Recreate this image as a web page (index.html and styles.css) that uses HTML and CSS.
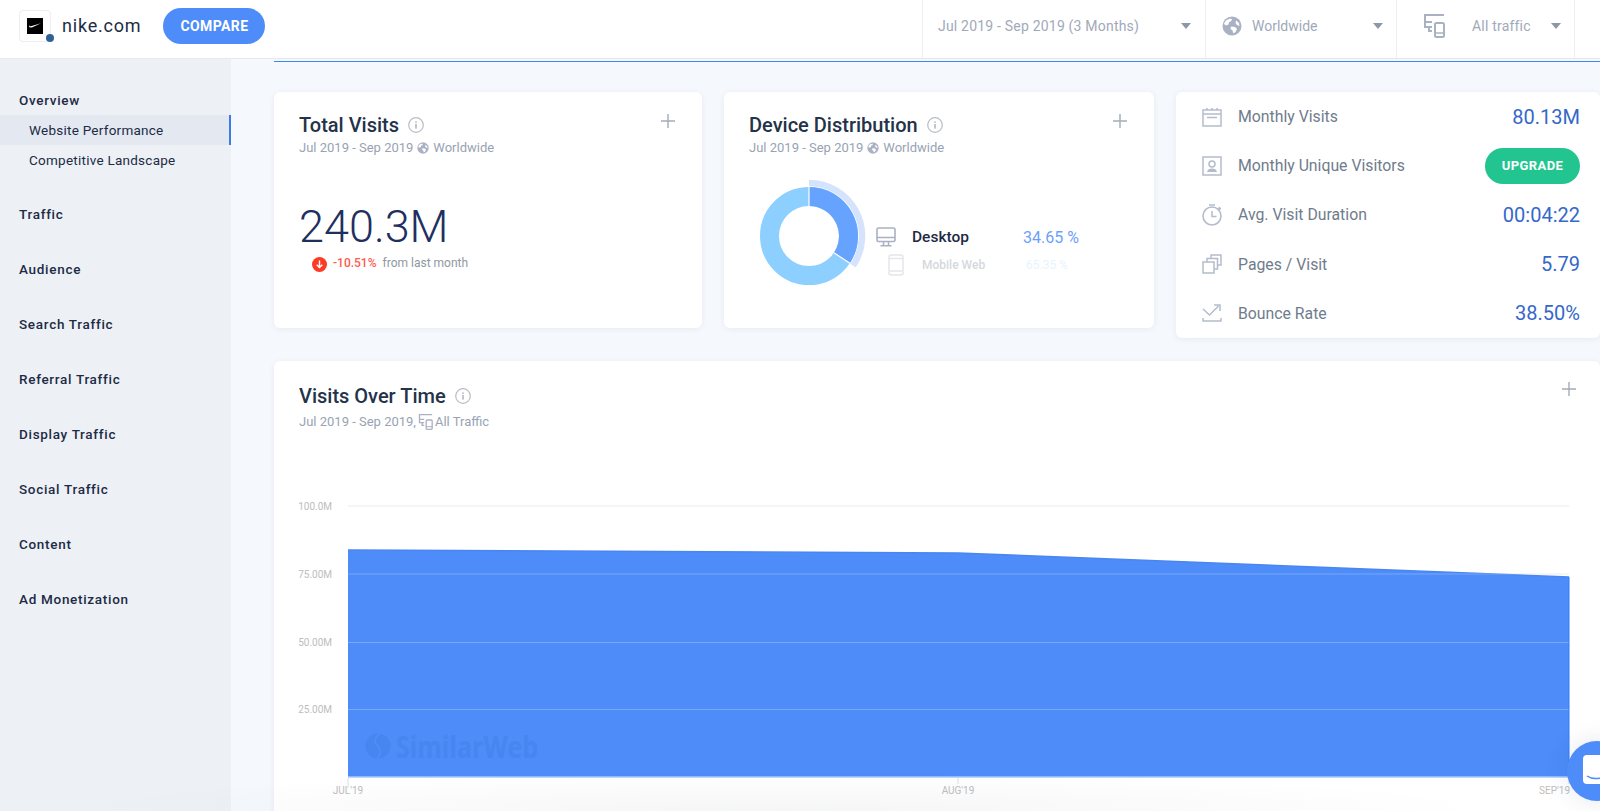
FILE: index.html
```html
<!DOCTYPE html>
<html lang="en">

<head>
    <meta charset="UTF-8">
    <meta name="viewport" content="width=device-width, initial-scale=1.0">
    <title>nike.com - Website Performance</title>
    <link rel="stylesheet" href="styles.css">
</head>

<body>

    <svg class="sprites" width="0" height="0">
        <symbol id="i-info" viewBox="0 0 16 16">
            <circle cx="8" cy="8" r="7.300" fill="none" stroke="#b9bdc3" stroke-width="1.200" />
            <rect x="7.300" y="7" width="1.400" height="4.600" fill="#a9aeb5" />
            <rect x="7.300" y="4.400" width="1.400" height="1.500" fill="#a9aeb5" />
        </symbol>
        <symbol id="i-plus" viewBox="0 0 14 14">
            <path d="M7 0v14M0 7h14" stroke="#a3acb9" stroke-width="1.400" fill="none" />
        </symbol>
        <symbol id="i-globe" viewBox="0 0 20 20">
            <circle cx="10" cy="10" r="9.500" fill="#a9b1c2" />
            <path d="M4 4.500c2-1.500 4-2 6-1.500l-1 2.500-2 .5-.5 2.500-2.500 1-2-1.500c.3-1.300 1-2.500 2-3.500zM9 10.500l4 .5 2 2-1.500 3-2 1.500-1-3-2-1.500zM14 4.500l3 2.500.5 3-2.500-1-1.500-2z" fill="#fff" />
        </symbol>
        <symbol id="i-devices" viewBox="0 0 22 24">
            <path d="M21 1H2v12h7M2 8h7M6 13v4h3" fill="none" stroke="#a9b1c2" stroke-width="2" />
            <rect x="12" y="9" width="9" height="14" rx="1.500" fill="none" stroke="#a9b1c2" stroke-width="2" />
            <path d="M12 19h9" stroke="#a9b1c2" stroke-width="1.500" />
        </symbol>
        <symbol id="i-caret" viewBox="0 0 12 7">
            <path d="M0 0h12L6 7z" fill="#8e96a8" />
        </symbol>
    </svg>

    <header class="topbar">
        <div class="site">
            <div class="site-logo">
                <span class="site-logo-mark">
                    <svg width="12" height="6" viewBox="0 0 12 6">
                        <path d="M12 .3L3.400 4.200C1.800 4.900.4 4.700.1 3.800 0 3.300.2 2.700.7 2 .5 3 .9 3.500 1.900 3.300z" fill="#fff" />
                    </svg>
                </span>
                <span class="site-logo-dot"></span>
            </div>
            <span class="site-name">nike.com</span>
            <button class="compare-btn" type="button">COMPARE</button>
        </div>
        <div class="filters">
            <div class="filter filter-date">
                <span>Jul 2019 - Sep 2019 (3 Months)</span>
                <svg class="caret" width="10" height="6"><use href="#i-caret" /></svg>
            </div>
            <div class="filter filter-geo">
                <svg width="20" height="20"><use href="#i-globe" /></svg>
                <span>Worldwide</span>
                <svg class="caret" width="10" height="6"><use href="#i-caret" /></svg>
            </div>
            <div class="filter filter-traffic">
                <svg width="22" height="24"><use href="#i-devices" /></svg>
                <span>All traffic</span>
                <svg class="caret" width="10" height="6"><use href="#i-caret" /></svg>
            </div>
        </div>
    </header>

    <div class="layout">
        <nav class="sidebar">
            <div class="nav-group nav-group-open">
                <div class="nav-title">Overview</div>
                <a class="nav-item nav-item-active">Website Performance</a>
                <a class="nav-item">Competitive Landscape</a>
            </div>
            <div class="nav-group"><div class="nav-title">Traffic</div></div>
            <div class="nav-group"><div class="nav-title">Audience</div></div>
            <div class="nav-group"><div class="nav-title">Search Traffic</div></div>
            <div class="nav-group"><div class="nav-title">Referral Traffic</div></div>
            <div class="nav-group"><div class="nav-title">Display Traffic</div></div>
            <div class="nav-group"><div class="nav-title">Social Traffic</div></div>
            <div class="nav-group"><div class="nav-title">Content</div></div>
            <div class="nav-group"><div class="nav-title">Ad Monetization</div></div>
        </nav>

        <main class="content">
            <div class="top-cards">
                <section class="card card-top">
                    <div class="card-head">
                        <div>
                            <h2 class="card-title">Total Visits
                                <svg class="info" width="16" height="16"><use href="#i-info" /></svg>
                            </h2>
                            <div class="card-sub">Jul 2019 - Sep 2019
                                <svg width="12" height="12"><use href="#i-globe" /></svg>
                                Worldwide
                            </div>
                        </div>
                        <svg class="plus" width="14" height="14"><use href="#i-plus" /></svg>
                    </div>
                    <div class="big-number">240.3M</div>
                    <div class="delta">
                        <svg width="15" height="15" viewBox="0 0 15 15">
                            <circle cx="7.500" cy="7.500" r="7.500" fill="#fb3b24" />
                            <path d="M7.500 3.500v7M4.700 7.800l2.800 2.800 2.800-2.800" fill="none" stroke="#fff" stroke-width="1.400" />
                        </svg>
                        <span class="delta-value">-10.51%</span>
                        <span class="delta-text">from last month</span>
                    </div>
                </section>

                <section class="card card-top">
                    <div class="card-head">
                        <div>
                            <h2 class="card-title">Device Distribution
                                <svg class="info" width="16" height="16"><use href="#i-info" /></svg>
                            </h2>
                            <div class="card-sub">Jul 2019 - Sep 2019
                                <svg width="12" height="12"><use href="#i-globe" /></svg>
                                Worldwide
                            </div>
                        </div>
                        <svg class="plus" width="14" height="14"><use href="#i-plus" /></svg>
                    </div>
                    <div class="devices">
                        <svg class="donut" width="114" height="114" viewBox="-57 -57 114 114">
                            <circle r="39.500" fill="none" stroke="#8dcfff" stroke-width="19" />
                            <path d="M0 -39.500A39.500 39.500 0 0 1 32.800 22" fill="none" stroke="#66a3ff" stroke-width="19" />
                            <path d="M0 -30V-49M25 16.800L40.900 27.300" stroke="#fff" stroke-width="1.200" />
                            <path d="M0 -53A53 53 0 0 1 44 29.600" fill="none" stroke="#d5e3fd" stroke-width="6.500" />
                        </svg>
                        <div class="legend">
                            <div class="legend-row">
                                <svg class="legend-icon" width="20" height="20" viewBox="0 0 20 20">
                                    <rect x="1" y="1" width="18" height="13.500" rx="1.500" fill="none" stroke="#a9b1c2" stroke-width="1.600" />
                                    <path d="M1 10.500h18M7.500 14.500v4M12.500 14.500v4M4.500 18.800h11" fill="none" stroke="#a9b1c2" stroke-width="1.500" />
                                </svg>
                                <span class="legend-name">Desktop</span>
                                <span class="legend-value">34.65 %</span>
                            </div>
                            <div class="legend-row legend-row-faded">
                                <svg class="legend-icon" width="16" height="22" viewBox="0 0 16 22">
                                    <rect x="1" y="1" width="14" height="20" rx="2" fill="none" stroke="#e3e6eb" stroke-width="1.500" />
                                    <path d="M1 4.500h14M1 17h14" stroke="#e3e6eb" stroke-width="1.300" />
                                </svg>
                                <span class="legend-name">Mobile Web</span>
                                <span class="legend-value">65.35 %</span>
                            </div>
                        </div>
                    </div>
                </section>

                <section class="card card-metrics">
                    <div class="metric">
                        <svg width="20" height="20" viewBox="0 0 20 20">
                            <path d="M1 3h18v16H1zM1 7h18M5 10.500h10M5 1v2M10 1v2M15 1v2" fill="none" stroke="#b4bccb" stroke-width="1.500" />
                        </svg>
                        <span class="metric-label">Monthly Visits</span>
                        <span class="metric-value">80.13M</span>
                    </div>
                    <div class="metric">
                        <svg width="20" height="20" viewBox="0 0 20 20">
                            <path d="M1 1h18v18H1z" fill="none" stroke="#b4bccb" stroke-width="1.500" />
                            <circle cx="10" cy="8" r="3" fill="none" stroke="#b4bccb" stroke-width="1.500" />
                            <path d="M5 16c.5-2.500 2.500-3.500 5-3.500s4.500 1 5 3.500z" fill="#b4bccb" />
                        </svg>
                        <span class="metric-label">Monthly Unique Visitors</span>
                        <button class="upgrade-btn" type="button">UPGRADE</button>
                    </div>
                    <div class="metric">
                        <svg width="20" height="22" viewBox="0 0 20 22">
                            <circle cx="10" cy="12" r="9" fill="none" stroke="#b4bccb" stroke-width="1.600" />
                            <path d="M7 1h6M10 7v5.500h4.500" fill="none" stroke="#b4bccb" stroke-width="1.500" />
                            <circle cx="17.500" cy="4.500" r="1.500" fill="#b4bccb" />
                        </svg>
                        <span class="metric-label">Avg. Visit Duration</span>
                        <span class="metric-value">00:04:22</span>
                    </div>
                    <div class="metric">
                        <svg width="20" height="20" viewBox="0 0 20 20">
                            <path d="M1 8h11v11H1zM5 8V4.500h10.500V15H12M9 4.500V1h10v10h-3.500" fill="none" stroke="#b4bccb" stroke-width="1.500" />
                        </svg>
                        <span class="metric-label">Pages / Visit</span>
                        <span class="metric-value">5.79</span>
                    </div>
                    <div class="metric">
                        <svg width="20" height="20" viewBox="0 0 20 20">
                            <path d="M1 6l6.500 6 9-9M12 2h6v6M1 15v3h18v-3" fill="none" stroke="#b4bccb" stroke-width="1.500" />
                        </svg>
                        <span class="metric-label">Bounce Rate</span>
                        <span class="metric-value">38.50%</span>
                    </div>
                </section>
            </div>

            <section class="card card-chart">
                <div class="card-head">
                    <div>
                        <h2 class="card-title">Visits Over Time
                            <svg class="info" width="16" height="16"><use href="#i-info" /></svg>
                        </h2>
                        <div class="card-sub">Jul 2019 - Sep 2019,
                            <svg width="15" height="16"><use href="#i-devices" /></svg>
                            All Traffic
                        </div>
                    </div>
                    <svg class="plus" width="14" height="14"><use href="#i-plus" /></svg>
                </div>
                <svg class="chart" width="1326" height="320" viewBox="274 491 1326 320">
                    <path d="M348 506H1569M348 574H1569" stroke="#e9ebee" />
                    <path d="M348 550L958 553L1569 577V777H348z" fill="#4d8cf9" />
                    <path d="M348 550L958 553L1569 577" fill="none" stroke="#4a86f2" stroke-width="1.500" />
                    <path d="M348 574H1569M348 642.500H1569M348 709.500H1569" stroke="#fff" stroke-opacity="0.250" />
                    <path d="M348 777H1569" stroke="#a9c8fc" stroke-width="1.500" />
                    <path d="M348 778v10M958 778v6M1569 778v6" stroke="#dadde1" />
                    <path d="M1569 577V777" stroke="#2f7cff" />
                    <g class="watermark">
                        <circle cx="378" cy="746" r="12.500" />
                        <path d="M382 733c-7 3-9 8-5 12s5 9 0 13" fill="none" stroke="#4d8cf9" stroke-width="2" />
                        <text x="396" y="758" textLength="142" lengthAdjust="spacingAndGlyphs">SimilarWeb</text>
                    </g>
                    <g class="axis">
                        <text x="332" y="510" text-anchor="end">100.0M</text>
                        <text x="332" y="578" text-anchor="end">75.00M</text>
                        <text x="332" y="646" text-anchor="end">50.00M</text>
                        <text x="332" y="713" text-anchor="end">25.00M</text>
                        <text x="348" y="794" text-anchor="middle">JUL'19</text>
                        <text x="958" y="794" text-anchor="middle">AUG'19</text>
                        <text x="1570" y="794" text-anchor="end">SEP'19</text>
                    </g>
                </svg>
            </section>
        </main>
    </div>

    <div class="bottom-shade"></div>

    <div class="chat-launcher">
        <svg width="40" height="30" viewBox="0 0 40 30">
            <rect width="40" height="29" rx="4" fill="#fff" />
            <path d="M4 21c4 3 9 3 14 2" fill="none" stroke="#4d8cf9" stroke-width="1.500" />
        </svg>
    </div>

</body>

</html>
```

FILE: styles.css
```css
* {
    box-sizing: border-box;
}

html,
body {
    margin: 0;
    height: 100%;
    overflow: hidden;
}

body {
    font-family: Roboto, "Liberation Sans", sans-serif;
    color: #1d2b45;
    background-color: #f5f8fd;
    position: relative;
}

.sprites {
    position: absolute;
}

button {
    border: none;
    color: white;
    font-family: inherit;
    font-weight: 700;
    letter-spacing: 0.4px;
    cursor: pointer;
}

/* top bar */

.topbar {
    height: 59px;
    display: flex;
    justify-content: space-between;
    background-color: white;
    border-bottom: 1px solid #e5e8ec;
}

.site {
    display: flex;
    align-items: center;
    padding: 0 0 7px 19px;
}

.site-logo {
    width: 32px;
    height: 32px;
    display: flex;
    align-items: center;
    justify-content: center;
    border: 1px solid #ebedf0;
    border-radius: 4px;
    position: relative;
}

.site-logo-mark {
    width: 16px;
    height: 16px;
    display: flex;
    align-items: center;
    justify-content: center;
    background-color: black;
}

.site-logo-dot {
    width: 8px;
    height: 8px;
    border-radius: 50%;
    background-color: #2f6295;
    position: absolute;
    right: -4px;
    bottom: -1px;
}

.site-name {
    margin-left: 11px;
    font-size: 18px;
    letter-spacing: 0.8px;
}

.compare-btn {
    width: 102px;
    height: 36px;
    margin-left: 22px;
    border-radius: 18px;
    background-color: #4d8cf9;
    font-size: 14px;
}

.filters {
    display: flex;
    margin-right: 25px;
}

.filter {
    height: 58px;
    display: flex;
    align-items: center;
    padding: 0 0 6px 0;
    border-left: 1px solid #eceef1;
    font-size: 14px;
    color: #a1a9b9;
}

.filter-date {
    width: 283px;
    padding-left: 15px;
    letter-spacing: 0.2px;
}

.filter-date span {
    width: 243px;
}

.filter-geo {
    width: 191px;
    padding-left: 16px;
}

.filter-geo span {
    width: 121px;
    margin-left: 10px;
}

.filter-traffic {
    width: 179px;
    padding-left: 26px;
    border-right: 1px solid #eceef1;
}

.filter-traffic span {
    width: 79px;
    margin-left: 27px;
    letter-spacing: 0.2px;
}

/* sidebar */

.layout {
    display: flex;
    height: calc(100% - 59px);
}

.sidebar {
    width: 231px;
    flex-shrink: 0;
    padding-top: 32px;
    background-color: #edf1f6;
}

.nav-group {
    margin-bottom: 37px;
}

.nav-group-open {
    margin-bottom: 30px;
}

.nav-title {
    height: 18px;
    line-height: 18px;
    padding-left: 19px;
    font-size: 13.500px;
    font-weight: 500;
    letter-spacing: 0.7px;
}

.nav-group-open .nav-title {
    height: 24px;
}

.nav-item {
    display: block;
    height: 30px;
    line-height: 30px;
    padding-left: 29px;
    font-size: 13.500px;
    letter-spacing: 0.25px;
}

.nav-item-active {
    background-color: #e4e9f1;
    border-right: 2px solid #3b7de8;
}

/* cards */

.content {
    flex: 1;
    min-width: 0;
    margin-left: 43px;
    margin-top: 2px;
    padding-top: 30px;
    border-top: 1px solid #4285f4;
}

.top-cards {
    display: grid;
    grid-template-columns: 428px 430px 1fr;
    gap: 22px;
    align-items: start;
}

.card {
    background-color: white;
    border-radius: 6px;
    box-shadow: 0 1px 6px rgba(40, 60, 100, 0.07);
}

.card-top {
    height: 236px;
    padding: 22px 27px 0 25px;
}

.card-head {
    display: flex;
    justify-content: space-between;
    align-items: flex-start;
}

.card-title {
    margin: 0;
    display: flex;
    align-items: center;
    gap: 9px;
    font-size: 20px;
    line-height: 22px;
    font-weight: 500;
    color: #24324a;
}

.card-sub {
    margin-top: 4px;
    display: flex;
    align-items: center;
    gap: 4px;
    font-size: 13px;
    line-height: 16px;
    color: #98a3b3;
}

.big-number {
    margin-top: 44px;
    font-size: 45px;
    line-height: 54px;
    font-weight: 300;
    color: #1f2f60;
}

.delta {
    margin-top: -1px;
    padding-left: 13px;
    display: flex;
    align-items: center;
    font-size: 12px;
}

.delta svg {
    margin-top: 4px;
}

.delta-value {
    margin-left: 6px;
    font-weight: 500;
    color: #ff5a4e;
}

.delta-text {
    margin-left: 6px;
    color: #8f97a3;
}

/* device distribution */

.devices {
    display: flex;
    align-items: flex-start;
    margin: 23px 0 0 2px;
}

.donut {
    margin-left: 1px;
    flex-shrink: 0;
}

.legend {
    margin: 46px 0 0 10px;
}

.legend-row {
    display: flex;
    align-items: center;
    height: 24px;
}

.legend-icon {
    flex-shrink: 0;
}

.legend-name {
    width: 111px;
    margin-left: 16px;
    font-size: 15.500px;
    font-weight: 500;
    color: #1d2b45;
}

.legend-value {
    font-size: 16px;
    color: #6c9ffb;
}

.legend-row-faded {
    margin: 4px 0 0 12px;
}

.legend-row-faded .legend-name {
    width: 104px;
    margin-left: 18px;
    font-size: 12px;
    color: #d5d8dd;
}

.legend-row-faded .legend-value {
    font-size: 12px;
    color: #e9f3fd;
}

/* metrics */

.card-metrics {
    height: 246px;
    padding: 0 20px 0 26px;
}

.metric {
    height: 49.200px;
    display: flex;
    align-items: center;
}

.metric-label {
    flex: 1;
    margin-left: 16px;
    font-size: 15.800px;
    color: #707c8c;
}

.metric-value {
    font-size: 20px;
    color: #3568c9;
}

.upgrade-btn {
    width: 95px;
    height: 36px;
    border-radius: 18px;
    background-color: #22c58f;
    font-size: 13px;
}

/* chart */

.card-chart {
    height: 480px;
    margin-top: 23px;
    padding: 24px 0 0 25px;
}

.card-chart .card-head {
    padding-right: 24px;
}

.card-chart .card-sub {
    margin-top: 7px;
    gap: 2px;
}

.card-chart .plus {
    margin-top: -3px;
}

.chart {
    display: block;
    margin: 61px 0 0 -25px;
}

.axis text {
    font-size: 10px;
    fill: #bdbdbd;
}

.watermark {
    fill: #4785f1;
}

.watermark text {
    font-family: "Open Sans", sans-serif;
    font-size: 31px;
    font-weight: 700;
    fill: #4785f1;
}

/* things on top */

.bottom-shade {
    height: 40px;
    position: absolute;
    left: 60px;
    right: 100px;
    bottom: 0;
    background: radial-gradient(ellipse 50% 100% at 50% 100%, rgba(60, 70, 80, 0.05), rgba(60, 70, 80, 0));
    pointer-events: none;
}

.chat-launcher {
    width: 60px;
    height: 60px;
    padding: 14px 0 0 16px;
    border-radius: 50%;
    background-color: #4d8cf9;
    box-shadow: 0 0 24px rgba(40, 60, 100, 0.12);
    position: absolute;
    left: 1567px;
    top: 741px;
}
```
